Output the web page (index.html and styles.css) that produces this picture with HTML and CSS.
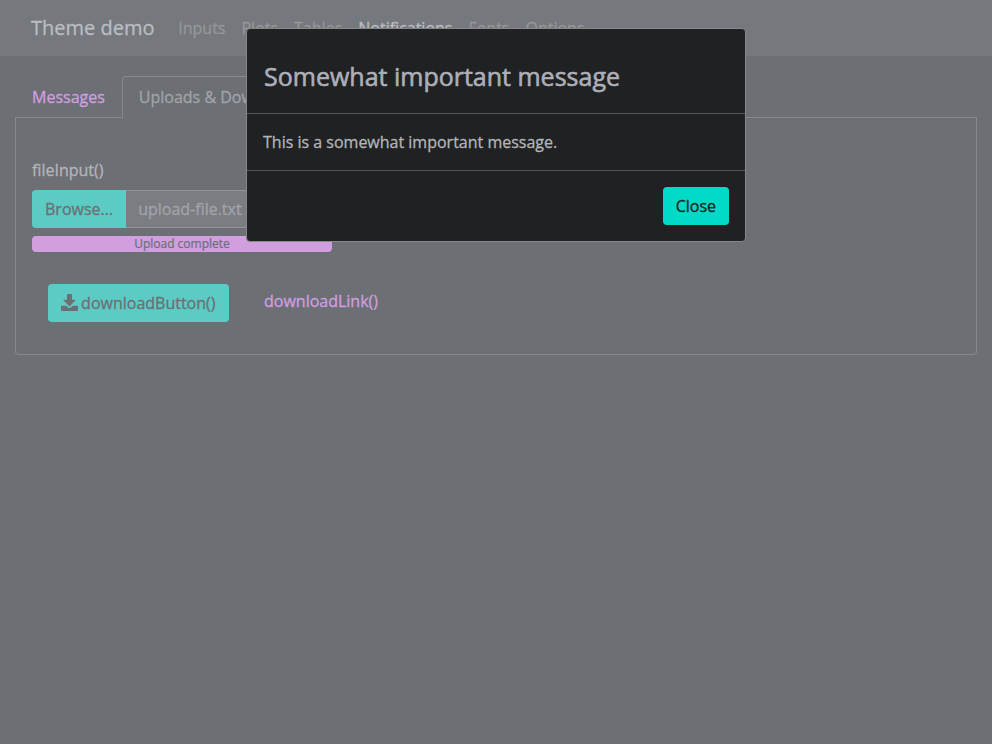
FILE: index.html
```html
<!DOCTYPE html>
<html lang="en">
<head>
<meta charset="utf-8">
<title>Theme demo</title>
<link rel="stylesheet" href="styles.css">
</head>
<body>
<nav class="navbar">
  <a class="brand">Theme demo</a>
  <ul class="nav-links">
    <li>Inputs</li><li>Plots</li><li>Tables</li><li class="active">Notifications</li><li>Fonts</li><li>Options</li>
  </ul>
</nav>
<main class="container">
  <div class="tabs">
    <a class="tab">Messages</a>
    <a class="tab tab-active">Uploads &amp; Downloads</a>
    <span class="tab-fill"></span>
  </div>
  <section class="card">
    <label class="label">fileInput()</label>
    <div class="file-group">
      <span class="browse">Browse...</span>
      <span class="file-name">upload-file.txt</span>
    </div>
    <div class="progress">Upload complete</div>
    <div class="downloads">
      <button class="btn btn-muted"><svg class="icon" viewBox="0 0 51 51"><path d="M18 1.500Q18 0 19.500 0h12Q33 0 33 1.500V17h9.500q2.500 0 1 2L27 36q-1.500 1.300-3 0L7.500 19q-1.500-2 1-2H18zM2 35h13l7 6q3 2 6 0L36 35h13q2 0 2 2v12q0 2-2 2H2q-2 0-2-2V37q0-2 2-2z"/></svg><span>downloadButton()</span></button>
      <a class="download-link">downloadLink()</a>
    </div>
  </section>
</main>
<div class="modal" role="dialog">
  <header class="modal-header"><h4 class="modal-title">Somewhat important message</h4></header>
  <div class="modal-body">This is a somewhat important message.</div>
  <footer class="modal-footer"><button class="btn btn-close">Close</button></footer>
</div>
</body>
</html>
```
FILE: styles.css
```css
* { box-sizing: border-box; }
body {
  margin: 0;
  min-height: 744px;
  background: #6c6f74;
  color: #b3b5b9;
  font: 16px/24px "Open Sans", sans-serif;
  -webkit-text-stroke: 0.3px currentColor;
}
.navbar {
  display: flex;
  align-items: center;
  height: 56px;
  padding: 0 31px;
  background: #75787d;
}
.brand { font-size: 20px; line-height: 30px; color: #bbbdc1; margin-right: 15.8px; }
.nav-links { display: flex; list-style: none; margin: 0; padding: 0; color: #95979b; }
.nav-links li { padding: 8px; }
.nav-links .active { color: #bbbdc1; }
.container { padding: 20px 15px 0; }
.tabs { display: flex; height: 42px; }
.tab {
  padding: 9px 17px 8px;
  border-bottom: 1px solid #86888d;
  color: #d19ee0;
  white-space: nowrap;
}
.tab-active {
  border: 1px solid #86888d;
  border-bottom: 0;
  border-radius: 4px 4px 0 0;
  padding: 8px 16px;
  color: #a2a4a8;
}
.tab-fill { flex: 1; border-bottom: 1px solid #86888d; }
.card {
  height: 237px;
  padding: 40px 16px 0;
  border: 1px solid #86888d;
  border-top: 0;
  border-radius: 0 0 4px 4px;
}
.label { display: block; margin-bottom: 8px; }
.file-group { display: flex; width: 300px; height: 38px; margin-bottom: 8px; }
.browse {
  padding: 7px 13px;
  border-radius: 4px 0 0 4px;
  background: #5bcbc4;
  color: #6c6f74;
}
.file-name {
  flex: 1;
  padding: 6px 12px;
  border: 1px solid #919398;
  border-left: 0;
  border-radius: 0 4px 4px 0;
  background: #7b7d82;
  color: #a2a4a8;
}
.progress {
  width: 300px;
  height: 16px;
  border-radius: 4px;
  background: #d19ee0;
  color: #6c6f74;
  font-size: 12px;
  line-height: 16px;
  text-align: center;
  -webkit-text-stroke-width: 0.2px;
}
.downloads { display: flex; align-items: flex-start; padding: 32px 16px 0; gap: 35.5px; }
.download-link { color: #d19ee0; padding-top: 5px; }
.btn {
  display: flex;
  align-items: center;
  height: 38px;
  padding: 0 13px;
  border: 0;
  border-radius: 4px;
  font: inherit;
}
.btn-muted { background: #5bcbc4; color: #6c6f74; gap: 3.5px; padding-left: 12.6px; }
.icon { width: 17px; height: 17px; margin-bottom: 2px; fill: currentColor; stroke: none; }
.modal {
  position: absolute;
  top: 28px;
  left: 246px;
  width: 500px;
  border: 1px solid #85878b;
  border-radius: 4px;
  background: #202123;
  color: #b3b5b9;
}
.modal-header { height: 85px; padding: 31px 16px 0 17px; border-bottom: 1px solid #535457; }
.modal-title {
  margin: 0;
  font: 500 25px/33px "Open Sans", sans-serif;
  color: #adafb8;
  -webkit-text-stroke-width: 0.6px;
}
.modal-body { padding: 16px; }
.modal-footer {
  display: flex;
  justify-content: flex-end;
  height: 71px;
  padding: 16px;
  border-top: 1px solid #535457;
}
.btn-close { background: #00dac6; color: #202123; }
```
